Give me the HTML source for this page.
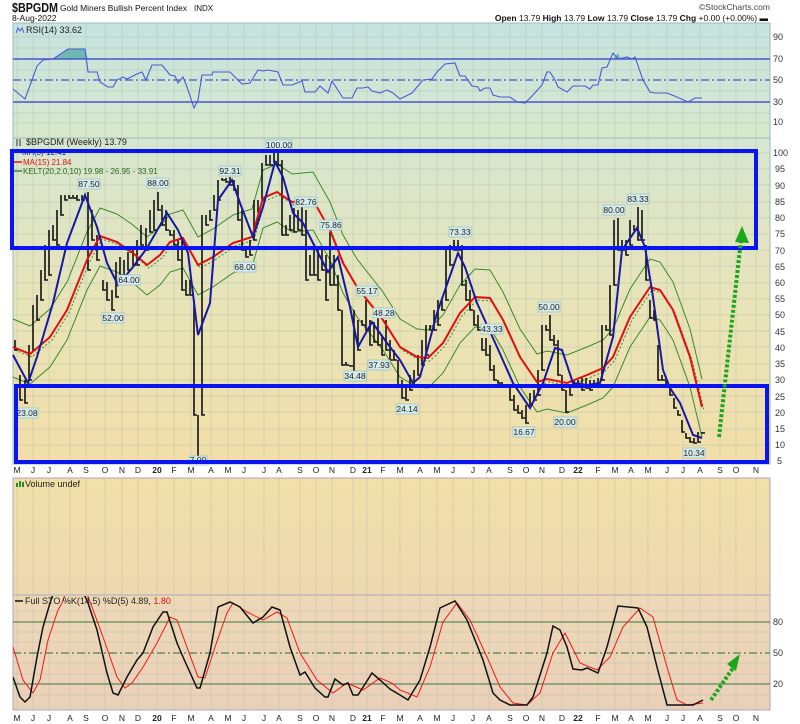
<!DOCTYPE html>
<html><head><meta charset="utf-8"><style>
html,body{margin:0;padding:0;background:#fff;width:800px;height:724px;overflow:hidden}
svg{display:block;font-family:"Liberation Sans",sans-serif}
.lb{font-size:9px;fill:#333}
.pl rect{fill:#d6ecec;stroke:#9fc4c4;stroke-width:0.8}
.pl text{font-size:8.5px;fill:#222;text-anchor:middle}
.ax text{font-size:8.5px;fill:#222;text-anchor:middle}
.yr{font-weight:bold}
</style></head><body>
<svg width="800" height="724" viewBox="0 0 800 724">
<defs>
<linearGradient id="gr" x1="0" y1="0" x2="0" y2="1"><stop offset="0" stop-color="#c6e3e0"/><stop offset="1" stop-color="#d8e8cc"/></linearGradient>
<linearGradient id="gp" x1="0" y1="0" x2="0" y2="1"><stop offset="0" stop-color="#d6e6d0"/><stop offset="0.5" stop-color="#e8e4b8"/><stop offset="1" stop-color="#f2dea8"/></linearGradient>
<linearGradient id="gv" x1="0" y1="0" x2="0" y2="1"><stop offset="0" stop-color="#f0e0a8"/><stop offset="1" stop-color="#eed8b0"/></linearGradient>
<linearGradient id="gs" x1="0" y1="0" x2="0" y2="1"><stop offset="0" stop-color="#eed8b6"/><stop offset="1" stop-color="#ebd0b8"/></linearGradient>
<clipPath id="cs"><rect x="13" y="596" width="757" height="114"/></clipPath>
</defs>
<!-- header -->
<text x="12" y="12" font-size="13" font-weight="bold" fill="#111" textLength="46" lengthAdjust="spacingAndGlyphs">$BPGDM</text>
<text x="60" y="11" font-size="8.5" fill="#111" textLength="127" lengthAdjust="spacingAndGlyphs">Gold Miners Bullish Percent Index</text>
<text x="194" y="11" font-size="8" fill="#111">INDX</text>
<text x="12" y="21" font-size="8.5" fill="#111">8-Aug-2022</text>
<text x="770" y="10" font-size="8.5" fill="#444" text-anchor="end">©StockCharts.com</text>
<text x="768" y="21" font-size="8.5" fill="#111" text-anchor="end"><tspan font-weight="bold">Open</tspan> 13.79  <tspan font-weight="bold">High</tspan> 13.79  <tspan font-weight="bold">Low</tspan> 13.79  <tspan font-weight="bold">Close</tspan> 13.79  <tspan font-weight="bold">Chg</tspan> +0.00 (+0.00%) ▬</text>

<!-- panels -->
<rect x="13" y="23" width="757" height="115" fill="url(#gr)" stroke="#9bb" stroke-width="1"/>
<rect x="13" y="138" width="757" height="326" fill="url(#gp)" stroke="#9bb" stroke-width="1"/>
<rect x="13" y="478" width="757" height="117" fill="url(#gv)" stroke="#aab" stroke-width="1"/>
<rect x="13" y="595" width="757" height="115" fill="url(#gs)" stroke="#aab" stroke-width="1"/>

<!-- vertical grid -->
<g stroke="#b8c4b4" stroke-width="0.7" opacity="0.7">
<path d="M17 23V464M33 23V464M49 23V464M70 23V464M86 23V464M105 23V464M122 23V464M138 23V464M157 23V464M174 23V464M191 23V464M211 23V464M228 23V464M244 23V464M264 23V464M279 23V464M300 23V464M316 23V464M332 23V464M353 23V464M367 23V464M383 23V464M400 23V464M420 23V464M437 23V464M453 23V464M473 23V464M489 23V464M510 23V464M526 23V464M542 23V464M562 23V464M578 23V464M598 23V464M615 23V464M631 23V464M648 23V464M667 23V464M683 23V464M700 23V464M720 23V464M736 23V464M756 23V464"/>
<path d="M17 478V710M33 478V710M49 478V710M70 478V710M86 478V710M105 478V710M122 478V710M138 478V710M157 478V710M174 478V710M191 478V710M211 478V710M228 478V710M244 478V710M264 478V710M279 478V710M300 478V710M316 478V710M332 478V710M353 478V710M367 478V710M383 478V710M400 478V710M420 478V710M437 478V710M453 478V710M473 478V710M489 478V710M510 478V710M526 478V710M542 478V710M562 478V710M578 478V710M598 478V710M615 478V710M631 478V710M648 478V710M667 478V710M683 478V710M700 478V710M720 478V710M736 478V710M756 478V710"/>
<path d="M13 37H770M13 48H770M13 70H770M13 91H770M13 113H770M13 123H770"/>
<path d="M13 153H770M13 169H770M13 185H770M13 202H770M13 218H770M13 234H770M13 250H770M13 266H770M13 283H770M13 299H770M13 315H770M13 331H770M13 347H770M13 364H770M13 380H770M13 396H770M13 412H770M13 429H770M13 445H770M13 461H770"/>
<path d="M13 611H770M13 632H770M13 642H770M13 663H770M13 674H770M13 695H770"/>
</g>

<!-- RSI -->
<path d="M53 59L68 49L85 49L88 59Z" fill="#6fb8b0"/>
<path d="M613 59L618 53L621 59Z" fill="#6fb8b0"/>
<g stroke="#4a55cc" fill="none">
<path d="M13 59H770M13 102H770" stroke-width="1.4"/>
<path d="M13 80H770" stroke-width="1.2" stroke-dasharray="8,3,2,3"/>
</g>
<polyline fill="none" stroke="#4a5ad8" stroke-width="1.1" points="13,89 25,99 32,80 37,66 43,60 53,59 68,49 85,49 88,72 97,72 100,82 108,87 113,87 117,80 123,77 127,79 137,74 142,72 146,80 152,65 162,65 170,75 175,76 178,83 183,77 187,87 194,108 198,100 202,75 212,75 213,72 230,72 242,84 250,83 258,70 263,71 268,70 278,72 283,85 292,85 302,81 305,92 315,92 320,86 328,93 332,81 343,98 352,98 357,88 363,88 368,87 372,91 380,93 387,90 393,93 400,99 412,93 417,87 423,80 432,79 437,72 445,64 455,63 460,76 465,76 472,86 478,87 480,91 485,88 490,88 493,95 500,97 510,97 517,102 525,103 533,95 542,85 547,72 550,72 555,80 558,87 567,92 573,86 585,86 590,89 593,85 598,85 602,68 607,67 613,53 618,59 627,57 632,59 635,57 643,80 650,92 655,93 667,93 677,97 688,102 695,98 702,98"/>
<text x="26" y="33" font-size="9" fill="#222">RSI(14) 33.62</text>
<path d="M16 33L18 28L20 31L22 28L24 33" fill="none" stroke="#4a5ad8" stroke-width="1"/>
<g class="lb"><text x="773" y="40">90</text><text x="773" y="62">70</text><text x="773" y="83">50</text><text x="773" y="105">30</text><text x="773" y="125">10</text></g>

<!-- Price: keltner -->
<g fill="none" stroke="#3a8a2a" stroke-width="1">
<polyline transform="translate(0,-28)" points="13,347 30,354 50,337 67,310 87,260 100,236 117,242 133,253 147,265 160,255 170,242 183,238 198,265 213,257 233,243 252,237 263,198 277,192 292,202 313,200 330,230 343,263 357,287 383,320 400,347 417,357 428,358 443,343 460,313 475,297 490,298 503,320 520,357 537,382 547,379 567,383 587,375 603,368 613,357 630,317 650,287 660,290 673,310 690,357 702,407"/>
<polyline transform="translate(0,30)" points="13,347 30,354 50,337 67,310 87,260 100,236 117,242 133,253 147,265 160,255 170,242 183,238 198,265 213,257 233,243 252,237 263,198 277,192 292,202 313,200 330,230 343,263 357,287 383,320 400,347 417,357 428,358 443,343 460,313 475,297 490,298 503,320 520,357 537,382 547,379 567,383 587,375 603,368 613,357 630,317 650,287 660,290 673,310 690,357 702,407"/>
<polyline transform="translate(2,3)" stroke-dasharray="2,2" points="13,347 30,354 50,337 67,310 87,260 100,236 117,242 133,253 147,265 160,255 170,242 183,238 198,265 213,257 233,243 252,237 263,198 277,192 292,202 313,200 330,230 343,263 357,287 383,320 400,347 417,357 428,358 443,343 460,313 475,297 490,298 503,320 520,357 537,382 547,379 567,383 587,375 603,368 613,357 630,317 650,287 660,290 673,310 690,357 702,407"/>
</g>
<!-- bars -->
<path fill="none" stroke="#111" stroke-width="1.6" d="M15 340V350h3M20 375V400h3M25 380V403h3M29 345V380h3M33 305V350h3M37 295V320h3M41 270V300h3M45 245V280h3M49 230V275h3M53 225V240h3M57 210V245h3M61 195V215h3M65 195V200h3M69 195V198h3M73 195V198h3M77 195V200h3M82 195V200h3M88 192V270h3M92 210V240h3M97 235V260h3M103 280V290h3M107 282V300h3M112 290V310h3M116 262V297h3M120 257V275h3M124 260V275h3M128 252V270h3M133 250V265h3M137 240V265h3M141 225V245h3M146 228V250h3M150 210V232h3M154 200V230h3M158 192V210h3M162 205V225h3M166 210V230h3M170 230V235h3M174 230V245h3M178 240V260h3M182 240V290h3M186 280V295h3M190 280V295h3M194 300V415h3M198 415V459h3M202 215V415h3M206 215V225h3M210 210V220h3M214 195V210h3M218 180V200h3M222 178V180h3M226 178V182h3M230 177V185h3M234 180V190h3M238 185V220h3M242 210V250h3M246 250V257h3M250 240V255h3M254 200V240h3M258 200V212h3M262 163V200h3M266 155V165h3M270 155V165h3M274 153V162h3M278 153V165h3M282 160V235h3M286 225V235h3M290 215V230h3M294 208V232h3M298 210V230h3M302 207V235h3M306 210V280h3M310 255V275h3M314 250V275h3M318 250V280h3M322 250V270h3M326 255V300h3M330 232V285h3M334 255V285h3M338 275V310h3M342 310V365h3M346 362V365h3M350 365V366h3M354 310V375h3M358 320V350h3M362 320V325h3M366 300V330h3M370 320V345h3M374 322V342h3M378 315V345h3M382 335V355h3M386 320V350h3M390 340V360h3M394 350V360h3M398 360V385h3M402 380V398h3M406 385V400h3M410 375V390h3M414 370V385h3M418 355V375h3M422 340V365h3M426 325V355h3M430 325V330h3M434 310V330h3M438 300V325h3M442 300V310h3M446 250V300h3M450 245V265h3M454 240V250h3M458 240V250h3M462 245V285h3M466 280V300h3M470 290V310h3M474 310V325h3M478 315V330h3M482 338V350h3M486 338V355h3M490 345V370h3M494 365V380h3M498 380V383h3M502 382V385h3M506 385V386h3M510 385V400h3M514 395V410h3M518 405V413h3M522 410V418h3M526 405V423h3M530 393V405h3M534 390V400h3M538 370V395h3M542 325V370h3M546 325V330h3M550 315V340h3M554 335V345h3M558 340V375h3M562 375V390h3M566 390V412h3M570 385V395h3M574 380V385h3M578 380V385h3M582 378V390h3M586 378V388h3M590 380V390h3M594 380V385h3M598 378V385h3M602 325V380h3M606 325V330h3M610 285V335h3M614 220V285h3M618 218V250h3M622 240V250h3M626 240V255h3M630 220V245h3M634 225V230h3M638 207V240h3M642 210V240h3M646 245V280h3M650 300V318h3M654 310V320h3M658 345V380h3M662 375V380h3M666 378V385h3M670 385V395h3M674 398V408h3M678 410V415h3M682 420V432h3M686 433V438h3M690 437V442h3M694 438V443h3M698 432V442h3M702 432V433h3"/>
<!-- MA15 red -->
<polyline fill="none" stroke="#e01010" stroke-width="2" points="13,347 30,354 50,337 67,310 87,260 100,236 117,242 133,253 147,265 160,255 170,242 183,238 198,265 213,257 233,243 252,237 263,198 277,192 292,202 313,200 330,230 343,263 357,287 383,320 400,347 417,357 428,358 443,343 460,313 475,297 490,298 503,320 520,357 537,382 547,379 567,383 587,375 603,368 613,357 630,317 650,287 660,290 673,310 690,357 702,407"/>
<!-- MA5 blue -->
<polyline fill="none" stroke="#1818a0" stroke-width="2" points="13,355 28,383 37,357 53,303 67,243 85,195 97,227 107,263 118,285 133,267 147,248 167,213 178,230 188,253 198,335 210,303 218,200 232,180 240,203 253,237 263,207 275,162 283,177 293,213 303,223 313,243 328,272 338,257 350,307 358,347 372,322 387,343 400,360 413,383 420,377 437,313 458,253 465,267 477,303 497,347 513,383 530,408 543,383 555,348 562,350 573,383 587,385 600,383 613,337 622,250 637,228 645,247 653,297 663,370 670,388 680,403 693,435 702,438"/>

<!-- legend -->
<text x="26" y="145" font-size="9" fill="#222">$BPGDM (Weekly) 13.79</text>
<path d="M17 139V146M20 139V146" stroke="#333" stroke-width="1"/>
<text x="22" y="155" font-size="8" fill="#1818a0">MA(5) 12.41</text>
<path d="M14 162H22" stroke="#e01010" stroke-width="1.5"/><text x="23" y="165" font-size="8" fill="#e01010">MA(15) 21.84</text>
<path d="M14 171H22" stroke="#3a8a2a" stroke-width="1.5"/><text x="23" y="174" font-size="8" fill="#2a6a1a">KELT(20,2.0,10) 19.98 - 26.95 - 33.91</text>

<!-- price labels -->
<g class="pl">
<rect x="78" y="179" width="22" height="10"/><text x="89" y="187">87.50</text>
<rect x="147" y="178" width="22" height="10"/><text x="158" y="186">88.00</text>
<rect x="219" y="166" width="22" height="10"/><text x="230" y="174">92.31</text>
<rect x="266" y="140" width="26" height="10"/><text x="279" y="148">100.00</text>
<rect x="295" y="197" width="22" height="10"/><text x="306" y="205">82.76</text>
<rect x="320" y="220" width="22" height="10"/><text x="331" y="228">75.86</text>
<rect x="118" y="275" width="22" height="10"/><text x="129" y="283">64.00</text>
<rect x="102" y="313" width="22" height="10"/><text x="113" y="321">52.00</text>
<rect x="234" y="262" width="22" height="10"/><text x="245" y="270">68.00</text>
<rect x="356" y="286" width="22" height="10"/><text x="367" y="294">55.17</text>
<rect x="373" y="308" width="22" height="10"/><text x="384" y="316">48.28</text>
<rect x="368" y="360" width="22" height="10"/><text x="379" y="368">37.93</text>
<rect x="344" y="371" width="22" height="10"/><text x="355" y="379">34.48</text>
<rect x="16" y="408" width="22" height="10"/><text x="27" y="416">23.08</text>
<rect x="396" y="404" width="22" height="10"/><text x="407" y="412">24.14</text>
<rect x="189" y="456" width="18" height="9"/><text x="198" y="463">7.00</text>
<rect x="449" y="227" width="22" height="10"/><text x="460" y="235">73.33</text>
<rect x="481" y="324" width="22" height="10"/><text x="492" y="332">43.33</text>
<rect x="538" y="302" width="22" height="10"/><text x="549" y="310">50.00</text>
<rect x="513" y="427" width="22" height="10"/><text x="524" y="435">16.67</text>
<rect x="554" y="417" width="22" height="10"/><text x="565" y="425">20.00</text>
<rect x="603" y="205" width="22" height="10"/><text x="614" y="213">80.00</text>
<rect x="627" y="194" width="22" height="10"/><text x="638" y="202">83.33</text>
<rect x="683" y="448" width="22" height="10"/><text x="694" y="456">10.34</text>
</g>

<!-- blue boxes -->
<rect x="12" y="151" width="744" height="97" fill="none" stroke="#0a14f0" stroke-width="4"/>
<rect x="16" y="386" width="751" height="76" fill="none" stroke="#0a14f0" stroke-width="4"/>

<!-- green arrow price -->
<path d="M719 437L741 240" stroke="#1aa81a" stroke-width="4" stroke-dasharray="3,2" fill="none"/>
<path d="M735 242L742 226L749 243Z" fill="#1aa81a"/>

<!-- price axis labels -->
<g class="lb">
<text x="773" y="156">100</text><text x="775" y="172">95</text><text x="775" y="189">90</text><text x="775" y="205">85</text><text x="775" y="221">80</text><text x="775" y="237">75</text><text x="775" y="254">70</text><text x="775" y="270">65</text><text x="775" y="286">60</text><text x="775" y="302">55</text><text x="775" y="318">50</text><text x="775" y="335">45</text><text x="775" y="351">40</text><text x="775" y="367">35</text><text x="775" y="383">30</text><text x="775" y="400">25</text><text x="775" y="416">20</text><text x="775" y="432">15</text><text x="775" y="448">10</text><text x="777" y="464">5</text>
</g>

<!-- month axes -->
<g class="ax">
<text x="17" y="473">M</text><text x="33" y="473">J</text><text x="49" y="473">J</text><text x="70" y="473">A</text><text x="86" y="473">S</text><text x="105" y="473">O</text><text x="122" y="473">N</text><text x="138" y="473">D</text><text x="157" y="473" class="yr">20</text><text x="174" y="473">F</text><text x="191" y="473">M</text><text x="211" y="473">A</text><text x="228" y="473">M</text><text x="244" y="473">J</text><text x="264" y="473">J</text><text x="279" y="473">A</text><text x="300" y="473">S</text><text x="316" y="473">O</text><text x="332" y="473">N</text><text x="353" y="473">D</text><text x="367" y="473" class="yr">21</text><text x="383" y="473">F</text><text x="400" y="473">M</text><text x="420" y="473">A</text><text x="437" y="473">M</text><text x="453" y="473">J</text><text x="473" y="473">J</text><text x="489" y="473">A</text><text x="510" y="473">S</text><text x="526" y="473">O</text><text x="542" y="473">N</text><text x="562" y="473">D</text><text x="578" y="473" class="yr">22</text><text x="598" y="473">F</text><text x="615" y="473">M</text><text x="631" y="473">A</text><text x="648" y="473">M</text><text x="667" y="473">J</text><text x="683" y="473">J</text><text x="700" y="473">A</text><text x="720" y="473">S</text><text x="736" y="473">O</text><text x="756" y="473">N</text>
</g>
<g class="ax" transform="translate(0,248)">
<text x="17" y="473">M</text><text x="33" y="473">J</text><text x="49" y="473">J</text><text x="70" y="473">A</text><text x="86" y="473">S</text><text x="105" y="473">O</text><text x="122" y="473">N</text><text x="138" y="473">D</text><text x="157" y="473" class="yr">20</text><text x="174" y="473">F</text><text x="191" y="473">M</text><text x="211" y="473">A</text><text x="228" y="473">M</text><text x="244" y="473">J</text><text x="264" y="473">J</text><text x="279" y="473">A</text><text x="300" y="473">S</text><text x="316" y="473">O</text><text x="332" y="473">N</text><text x="353" y="473">D</text><text x="367" y="473" class="yr">21</text><text x="383" y="473">F</text><text x="400" y="473">M</text><text x="420" y="473">A</text><text x="437" y="473">M</text><text x="453" y="473">J</text><text x="473" y="473">J</text><text x="489" y="473">A</text><text x="510" y="473">S</text><text x="526" y="473">O</text><text x="542" y="473">N</text><text x="562" y="473">D</text><text x="578" y="473" class="yr">22</text><text x="598" y="473">F</text><text x="615" y="473">M</text><text x="631" y="473">A</text><text x="648" y="473">M</text><text x="667" y="473">J</text><text x="683" y="473">J</text><text x="700" y="473">A</text><text x="720" y="473">S</text><text x="736" y="473">O</text><text x="756" y="473">N</text>
</g>

<!-- volume -->
<path d="M16 487h2v-4h-2zM19 487h2v-6h-2zM22 487h2v-5h-2z" fill="#2a8a2a"/>
<text x="25" y="487" font-size="9" fill="#222">Volume undef</text>

<!-- STO -->
<g stroke-width="1.3" fill="none">
<path d="M13 622H770M13 684H770" stroke="#5a8a5a"/>
<path d="M13 653H770" stroke="#2a6a3a" stroke-width="1" stroke-dasharray="8,3,2,3"/>
</g>
<g clip-path="url(#cs)" fill="none">
<polyline stroke="#f01818" stroke-width="1" points="13,647 23,680 33,693 40,680 48,640 58,610 62,603 70,580 80,575 92,607 103,637 117,677 125,688 132,683 143,667 157,643 170,617 177,620 188,650 198,677 205,678 215,647 227,613 233,603 247,612 263,620 277,612 287,618 300,653 317,680 333,693 347,683 363,690 380,678 392,683 400,690 417,697 430,667 443,622 457,603 470,620 487,657 500,687 513,703 527,705 540,693 553,653 565,633 580,663 597,670 610,657 623,627 640,608 653,617 667,667 677,700 687,705 703,703"/>
<polyline stroke="#111" stroke-width="1.5" points="13,677 20,697 25,702 30,697 37,657 43,627 50,603 56,585 80,585 88,603 97,630 107,673 113,693 118,695 127,677 137,660 143,653 153,627 163,612 167,612 177,643 183,657 197,688 200,688 210,653 218,607 230,602 240,607 253,623 263,617 272,607 280,610 290,647 300,675 305,672 315,688 325,697 328,697 335,679 343,685 348,683 353,695 358,695 372,673 380,680 390,689 400,695 408,700 420,680 430,647 440,608 455,601 467,620 483,660 493,693 500,700 510,705 527,705 533,697 547,653 553,626 560,630 567,647 573,669 582,670 587,668 598,673 607,647 618,606 638,608 647,627 657,667 667,705 693,705 703,700"/>
</g>
<path d="M15 601H23" stroke="#111" stroke-width="1.5"/>
<text x="25" y="604" font-size="9" fill="#222">Full STO %K(14,5) %D(5) 4.89, <tspan fill="#e01010">1.80</tspan></text>
<g class="lb"><text x="773" y="625">80</text><text x="773" y="656">50</text><text x="773" y="687">20</text></g>
<path d="M711 700L733 668" stroke="#1aa81a" stroke-width="4" stroke-dasharray="3,2" fill="none"/>
<path d="M727 664L740 654L736 671Z" fill="#1aa81a"/>
</svg>
</body></html>
